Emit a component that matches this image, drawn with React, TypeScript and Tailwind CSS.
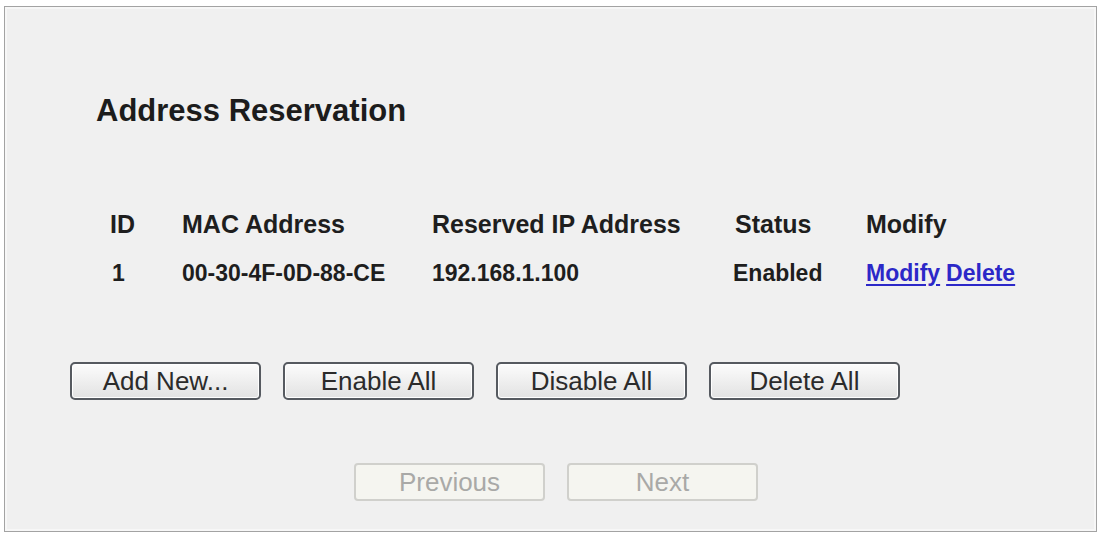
import React from "react";

const columns = [
  { key: "id", label: "ID", width: "w-[72px]" },
  { key: "mac", label: "MAC Address", width: "w-[250px]" },
  { key: "ip", label: "Reserved IP Address", width: "w-[303px]" },
  { key: "status", label: "Status", width: "w-[131px]" },
  { key: "modify", label: "Modify", width: "flex-1" },
];

const entries = [
  { id: "1", mac: "00-30-4F-0D-88-CE", ip: "192.168.1.100", status: "Enabled" },
];

function Button({ label, disabled = false }: { label: string; disabled?: boolean }) {
  return (
    <button
      disabled={disabled}
      className={
        disabled
          ? "w-[191px] h-[38px] rounded-[4px] border-2 border-[#d0d0cc] bg-[#f5f5f0] text-[#a9a9a7] text-[26px] leading-none"
          : "w-[191px] h-[38px] rounded-[5px] border-2 border-[#565a60] bg-gradient-to-b from-[#fcfcfc] to-[#e2e2e2] text-[#2b2b2b] text-[26px] leading-none shadow-[inset_0_0_0_1px_#ffffff]"
      }
    >
      {label}
    </button>
  );
}

export default function App() {
  return (
    <div className="w-[1100px] h-[534px] bg-white pt-[6px] pl-[4px] font-['Liberation_Sans',Arial,sans-serif]">
      <div className="w-[1093px] h-[526px] border border-[#a3a3a3] bg-[#f0f0f0] shadow-[inset_0_0_0_2px_#f7f7f7] flex flex-col">
        {/* Title */}
        <h1 className="mt-[89px] ml-[91px] text-[31px] leading-[30px] font-bold text-[#1c1c1c]">
          Address Reservation
        </h1>

        {/* Reservation table */}
        <div className="mt-[86px] ml-[105px] flex flex-col gap-[26px] text-[#1e1e1e] font-bold">
          <div className="flex text-[25px] leading-[24px]">
            {columns.map((c) => (
              <div key={c.key} className={c.width}>
                {c.label}
              </div>
            ))}
          </div>
          {entries.map((e) => (
            <div key={e.id} className="flex text-[23px] leading-[23px]">
              <div className="w-[72px] pl-[2px]">{e.id}</div>
              <div className="w-[250px]">{e.mac}</div>
              <div className="w-[303px]">{e.ip}</div>
              <div className="w-[131px] -ml-[2px] mr-[2px]">{e.status}</div>
              <div className="flex gap-[6px] text-[#2c28c8]">
                <a href="#" className="underline underline-offset-[3px]">Modify</a>
                <a href="#" className="underline underline-offset-[3px]">Delete</a>
              </div>
            </div>
          ))}
        </div>

        {/* Bulk actions */}
        <div className="mt-[77px] ml-[65px] flex gap-[22px]">
          <Button label="Add New..." />
          <Button label="Enable All" />
          <Button label="Disable All" />
          <Button label="Delete All" />
        </div>

        {/* Paging */}
        <div className="mt-[63px] ml-[349px] flex gap-[22px]">
          <Button label="Previous" disabled />
          <Button label="Next" disabled />
        </div>
      </div>
    </div>
  );
}
